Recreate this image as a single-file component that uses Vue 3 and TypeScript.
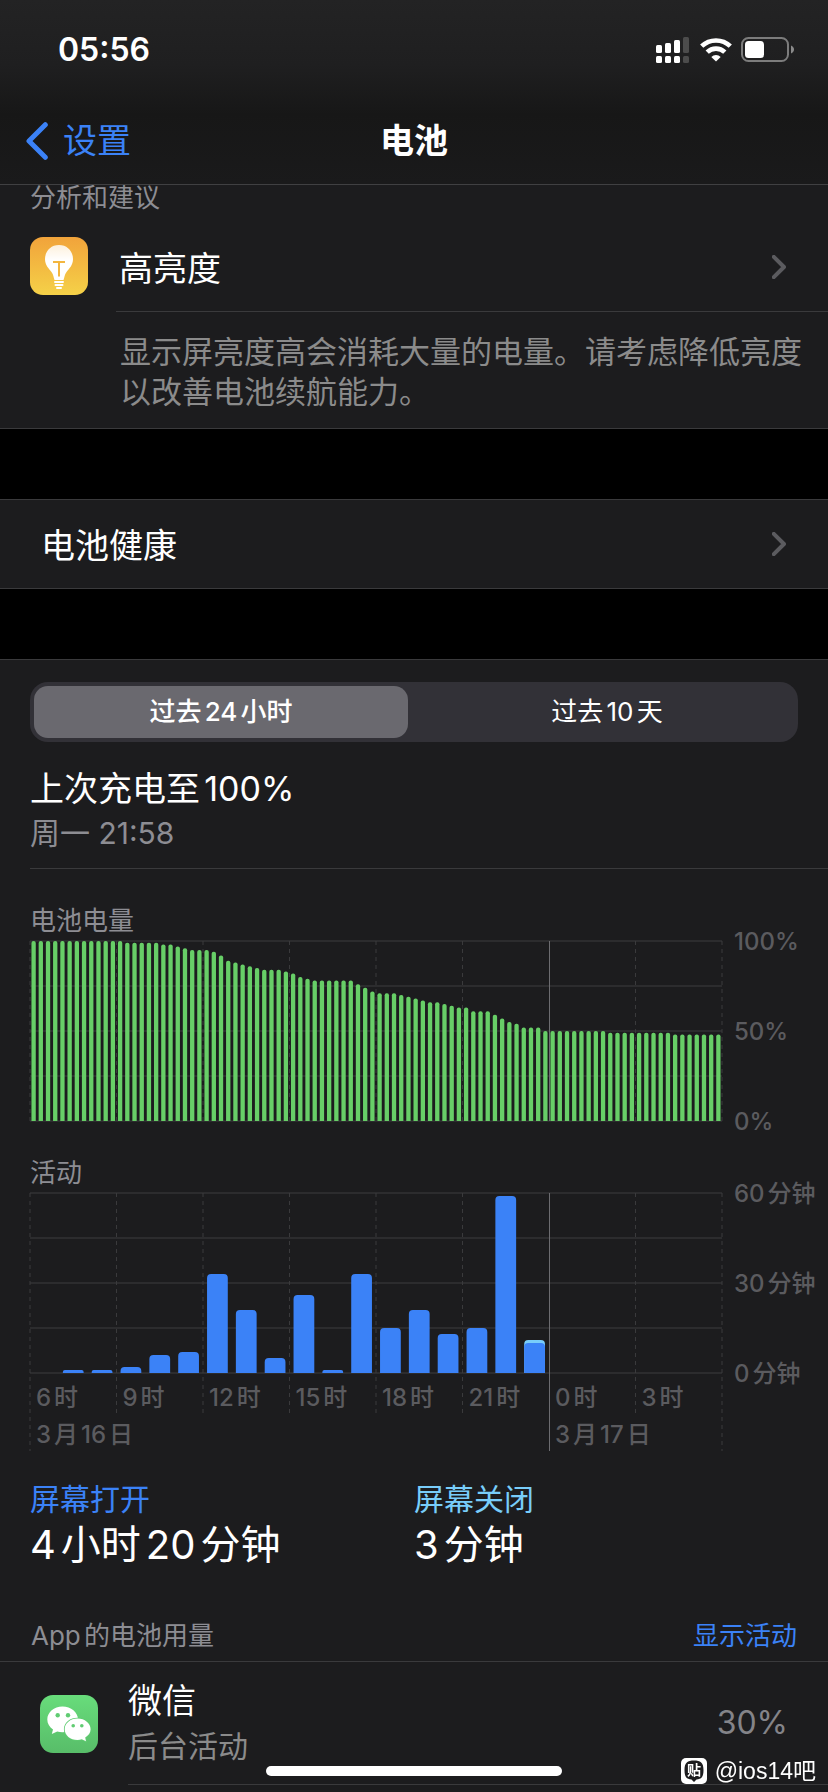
<script setup lang="ts">
import { computed, ref } from 'vue'

type Range = 'day' | 'tenDays'

interface HourUsage {
  hour: number
  screenOn: number
  screenOff: number
}

interface AppUsage {
  name: string
  detail: string
  share: number
}

const ranges: { id: Range; label: string }[] = [
  { id: 'day', label: '过去24小时' },
  { id: 'tenDays', label: '过去10天' },
]
const selectedRange = ref<Range>('day')

// Battery level runs as [percent, number of consecutive quarter-hour samples].
const levelRuns: [number, number][] = [
  [100, 13], [99, 5], [98, 2], [97, 1], [96, 1], [95, 3], [94, 1], [92, 1],
  [89, 1], [88, 1], [87, 1], [86, 1], [85, 1], [84, 3], [83, 1], [82, 1],
  [80, 1], [79, 1], [78, 6], [76, 1], [74, 1], [72, 1], [71, 3], [70, 1],
  [69, 1], [68, 1], [67, 1], [66, 2], [65, 1], [64, 1], [63, 2], [61, 3],
  [59, 1], [57, 1], [55, 1], [54, 1], [52, 3], [50, 9], [49, 9], [48, 7],
]
const levels = computed(() => levelRuns.flatMap(([value, count]) => Array<number>(count).fill(value)))

const screenOnMinutes = [0, 1, 1, 2, 6, 7, 33, 21, 5, 26, 1, 33, 15, 21, 13, 15, 59, 10, 0, 0, 0, 0, 0, 0]
const usage = computed<HourUsage[]>(() =>
  screenOnMinutes.map((screenOn, hour) => ({ hour, screenOn, screenOff: hour === 17 ? 1 : 0 })),
)
const activeHours = computed(() => usage.value.filter((u) => u.screenOn + u.screenOff > 0))

const plotTop = 1
const plotHeight = 180
const plotBottom = plotTop + plotHeight
const rows = [0, 1, 2, 3, 4].map((n) => plotTop + (n * plotHeight) / 4)
const ticks = [0, 1, 2, 3, 4, 5, 6, 7, 8]
const midnight = 6

const hourLabels = ['6时', '9时', '12时', '15时', '18时', '21时', '0时', '3时']
const levelAxis = ['100%', '50%', '0%']
const activityAxis = ['60分钟', '30分钟', '0分钟']

const levelY = (value: number) => plotBottom - (value / 100) * plotHeight
const minuteY = (minutes: number) => plotBottom - (minutes / 60) * plotHeight
const percent = (fraction: number) => `${fraction * 100}%`
const tickEnd = (tick: number) => (tick === 0 || tick === 8 ? 259 : 225)

const apps: AppUsage[] = [{ name: '微信', detail: '后台活动', share: 30 }]
</script>

<template>
  <div class="screen" lang="zh-CN">
    <header class="topbar">
      <div class="status">
        <span class="clock">05:56</span>
        <div class="indicators">
          <svg class="signal" width="33" height="26" viewBox="0 0 33 26" aria-label="信号">
            <g fill="#fff">
              <rect x="0" y="8" width="6" height="8" rx="1.5" />
              <rect x="9" y="6" width="6" height="10" rx="1.5" />
              <rect x="18" y="3" width="6" height="13" rx="1.5" />
              <rect x="0" y="19" width="6" height="7" rx="1.5" />
              <rect x="9" y="19" width="6" height="7" rx="1.5" />
              <rect x="18" y="19" width="6" height="7" rx="1.5" />
            </g>
            <g fill="#4c4c4c">
              <rect x="27" y="0" width="6" height="16" rx="1.5" />
              <rect x="27" y="19" width="6" height="7" rx="1.5" />
            </g>
          </svg>
          <svg class="wifi" width="32" height="26" viewBox="0 0 32 26" aria-label="无线局域网">
            <g fill="none" stroke="#fff" stroke-width="4.6">
              <path d="M1.7 9.2 A20.6 20.6 0 0 1 30.3 9.2" />
              <path d="M7.2 15.2 A12.6 12.6 0 0 1 24.8 15.2" />
            </g>
            <path d="M16 24.6 L11.3 19.9 A6.8 6.8 0 0 1 20.7 19.9 Z" fill="#fff" />
          </svg>
          <svg class="cell" width="53" height="26" viewBox="0 0 53 26" aria-label="电池">
            <rect x="1" y="1" width="46" height="23" rx="6.5" fill="none" stroke="#7c7c7c" stroke-width="2" />
            <rect x="4" y="4" width="19" height="17" rx="3.5" fill="#fff" />
            <path d="M50 8.5 C54 10 54 15 50 16.5 Z" fill="#8a8a8a" />
          </svg>
        </div>
      </div>
      <nav class="nav">
        <a class="back" href="#settings">
          <svg width="22" height="38" viewBox="0 0 22 38" aria-hidden="true">
            <path d="M19.3 2.7 L3 19 L19.3 35.3" fill="none" stroke="currentColor" stroke-width="5" stroke-linecap="round" stroke-linejoin="round" />
          </svg>
          <span>设置</span>
        </a>
        <h1 class="title">电池</h1>
      </nav>
    </header>

    <main>
      <section class="group insights">
        <h2 class="caption">分析和建议</h2>
        <button class="insight-row" type="button">
          <svg class="icon" width="58" height="58" viewBox="0 0 58 58" aria-hidden="true">
            <defs>
              <linearGradient id="amber" x1="0" y1="0" x2="0" y2="1">
                <stop offset="0" stop-color="#f1a33b" />
                <stop offset="1" stop-color="#f5d148" />
              </linearGradient>
              <linearGradient id="glow" x1="0" y1="0" x2="0" y2="1">
                <stop offset="0" stop-color="#fff" stop-opacity=".82" />
                <stop offset=".45" stop-color="#fff" />
              </linearGradient>
            </defs>
            <rect width="58" height="58" rx="13" fill="url(#amber)" />
            <path d="M29 8 C20.5 8 15 14.5 15 22 C15 28.5 19 31.5 21.5 35 C23.5 38 23.5 40 24.5 43 H33.5 C34.5 40 34.5 38 36.5 35 C39 31.5 43 28.5 43 22 C43 14.5 37.5 8 29 8 Z" fill="url(#glow)" />
            <path d="M23 25 H35 M29 25 V39.5" fill="none" stroke="#f3b640" stroke-width="2" />
            <path d="M25 45 H33 M25.5 48 H32.5 M27 51 H31" stroke="#fff" stroke-width="2" stroke-linecap="round" />
          </svg>
          <span class="insight-main">
            <span class="label">高亮度</span>
            <svg class="chevron" width="14" height="24" viewBox="0 0 14 24" aria-hidden="true">
              <path d="M1.8 1.8 L12 12 L1.8 22.2" />
            </svg>
          </span>
        </button>
        <p class="advice">显示屏亮度高会消耗大量的电量。请考虑降低亮度以改善电池续航能力。</p>
      </section>

      <section class="group">
        <button class="health-row" type="button">
          <span class="label">电池健康</span>
          <svg class="chevron" width="14" height="24" viewBox="0 0 14 24" aria-hidden="true">
            <path d="M1.8 1.8 L12 12 L1.8 22.2" />
          </svg>
        </button>
      </section>

      <section class="group usage">
        <div class="segments" role="group" aria-label="时间范围">
          <button
            v-for="range in ranges"
            :key="range.id"
            type="button"
            class="segment"
            :class="{ selected: selectedRange === range.id }"
            :aria-pressed="selectedRange === range.id"
            @click="selectedRange = range.id"
          >
            {{ range.label }}
          </button>
        </div>

        <div class="charge">
          <p class="charge-level">上次充电至100%</p>
          <p class="charge-time">周一 21:58</p>
        </div>

        <h3 class="caption chart-title">电池电量</h3>
        <div class="chart">
          <svg class="plot level-plot" role="img" aria-label="电池电量">
            <rect v-for="y in rows" :key="y" class="grid-row" x="0" :y="y - 1" width="100%" height="2" />
            <template v-for="tick in ticks" :key="tick">
              <line v-if="tick !== midnight" class="grid-tick" :x1="percent(tick / 8)" :x2="percent(tick / 8)" y1="1" y2="181" />
            </template>
            <rect class="midnight" x="75%" y="1" width="1" height="180" />
            <svg width="100%" height="181">
              <rect
                v-for="(level, i) in levels"
                :key="i"
                class="level-bar"
                :x="percent((i + 0.2) / 96)"
                :y="levelY(level)"
                :width="percent(0.6 / 96)"
                height="200"
                rx="2"
              />
            </svg>
          </svg>
          <div class="axis">
            <span v-for="label in levelAxis" :key="label">{{ label }}</span>
          </div>
        </div>

        <h3 class="caption chart-title activity-title">活动</h3>
        <div class="chart">
          <div class="activity">
            <svg class="plot activity-plot" role="img" aria-label="活动">
              <rect v-for="y in rows" :key="y" class="grid-row" x="0" :y="y - 1" width="100%" height="2" />
              <template v-for="tick in ticks" :key="tick">
                <line v-if="tick !== midnight" class="grid-tick" :x1="percent(tick / 8)" :x2="percent(tick / 8)" y1="1" :y2="tickEnd(tick)" />
              </template>
              <rect class="midnight" x="75%" y="1" width="1" height="258" />
              <svg width="100%" height="181">
                <template v-for="u in activeHours" :key="u.hour">
                  <rect v-if="u.screenOff" class="off-bar" :x="percent((u.hour + 0.14) / 24)" :y="minuteY(u.screenOn + u.screenOff)" :width="percent(0.72 / 24)" height="200" rx="4" />
                  <rect class="on-bar" :x="percent((u.hour + 0.14) / 24)" :y="minuteY(u.screenOn)" :width="percent(0.72 / 24)" height="200" :rx="u.screenOn > 1 ? 4 : 2" />
                </template>
              </svg>
            </svg>
            <div class="x-axis">
              <div class="hours">
                <span v-for="label in hourLabels" :key="label">{{ label }}</span>
              </div>
              <div class="days">
                <span>3月16日</span>
                <span>3月17日</span>
              </div>
            </div>
          </div>
          <div class="axis">
            <span v-for="label in activityAxis" :key="label">{{ label }}</span>
          </div>
        </div>

        <dl class="totals">
          <div>
            <dt class="on">屏幕打开</dt>
            <dd>4小时20分钟</dd>
          </div>
          <div>
            <dt class="off">屏幕关闭</dt>
            <dd>3分钟</dd>
          </div>
        </dl>

        <div class="apps-head">
          <h3 class="caption">App的电池用量</h3>
          <button class="toggle" type="button">显示活动</button>
        </div>
        <ul class="apps">
          <li v-for="app in apps" :key="app.name" class="app">
            <svg class="icon" width="58" height="58" viewBox="0 0 58 58" aria-hidden="true">
              <defs>
                <linearGradient id="leaf" x1="0" y1="0" x2="0" y2="1">
                  <stop offset="0" stop-color="#68dc7b" />
                  <stop offset="1" stop-color="#58bd69" />
                </linearGradient>
              </defs>
              <rect width="58" height="58" rx="13" fill="url(#leaf)" />
              <path d="M22.5 11.5 C14 11.5 7.3 17.3 7.3 24.5 C7.3 28.5 9.5 32 13 34.5 L11.8 39 L17.2 36.5 C19 37 20.7 37.3 22.5 37.3 C31 37.3 38 31.6 38 24.5 C38 17.3 31 11.5 22.5 11.5 Z" fill="#fff" />
              <path d="M37.5 23.5 C30.3 23.5 24.7 28.3 24.7 34.2 C24.7 40.2 30.3 45 37.5 45 C39 45 40.5 44.8 41.8 44.3 L46 46.2 L45.2 42.5 C48.5 40.5 50.6 37.5 50.6 34.2 C50.6 28.3 44.8 23.5 37.5 23.5 Z" fill="#fff" stroke="#60cc72" stroke-width="1.6" paint-order="stroke" />
              <g fill="#60cc72">
                <circle cx="17.7" cy="20.3" r="2.2" />
                <circle cx="28" cy="20.3" r="2.2" />
                <circle cx="33.2" cy="30.7" r="1.8" />
                <circle cx="41.8" cy="30.7" r="1.8" />
              </g>
            </svg>
            <div class="app-main">
              <div class="app-text">
                <span class="app-name">{{ app.name }}</span>
                <span class="app-detail">{{ app.detail }}</span>
              </div>
              <span class="app-share">{{ app.share }}%</span>
            </div>
          </li>
        </ul>
      </section>
    </main>

    <div class="watermark">
      <svg width="26" height="26" viewBox="0 0 26 26" aria-hidden="true">
        <rect width="26" height="26" rx="5" fill="#fff" />
        <path d="M13 2.5 C19.5 2.5 22.5 4.5 22.5 12 C22.5 19 20.5 21 15.5 21.6 L13 24 L10.5 21.6 C5.5 21 3.5 19 3.5 12 C3.5 4.5 6.5 2.5 13 2.5 Z" fill="#1c1c1e" />
        <text class="stamp" x="13" y="17" text-anchor="middle">贴</text>
      </svg>
      <span>@ios14吧</span>
    </div>
    <div class="home-indicator"></div>
  </div>
</template>

<style>
body {
  background: #1c1c1e;
}
</style>

<style scoped>
.screen {
  display: flex;
  flex-direction: column;
  min-height: 100vh;
  background: #000;
  color: #fff;
  font-family: Inter, 'Noto Sans CJK SC', sans-serif;
  text-autospace: normal;
}

.screen *,
.screen {
  box-sizing: border-box;
}

main {
  display: flex;
  flex: 1;
  flex-direction: column;
}

h1,
h2,
h3,
p,
dl,
dd,
ul {
  margin: 0;
  padding: 0;
}

button {
  border: 0;
  padding: 0;
  background: none;
  color: inherit;
  font: inherit;
  text-align: left;
  cursor: pointer;
}

svg {
  display: block;
  flex: none;
}

.topbar {
  position: sticky;
  top: 0;
  z-index: 2;
  background: linear-gradient(#232324, #1f1f20 35%, #171717 62%, #1a1a1b);
  border-bottom: 1px solid #404042;
}

.status {
  display: flex;
  justify-content: space-between;
  align-items: center;
  height: 100px;
  padding: 0 34px 0 58px;
}

.clock {
  font-size: 32px;
  line-height: 40px;
  font-weight: 600;
}

.indicators {
  display: flex;
  align-items: center;
  gap: 11px;
}

.wifi {
  margin-right: -2px;
}

.nav {
  display: grid;
  grid-template-columns: 1fr auto 1fr;
  align-items: center;
  height: 84px;
  padding: 0 26px 2px;
}

.back {
  display: flex;
  align-items: center;
  gap: 15px;
  color: #3b82f7;
  font-size: 34px;
  line-height: 44px;
  text-decoration: none;
}

.title {
  font-size: 34px;
  line-height: 44px;
  font-weight: 600;
}

.group {
  background: #1c1c1e;
  border-top: 1px solid #3a3a3c;
  border-bottom: 1px solid #3a3a3c;
  margin-bottom: 70px;
}

.group:last-child {
  flex: 1;
  margin-bottom: 0;
  border-bottom: 0;
}

.insights {
  border-top: 0;
}

.caption {
  color: #8d8d93;
  font-size: 26px;
  line-height: 26px;
  font-weight: 400;
}

.insights .caption {
  padding: 0 30px 9px;
}

.insight-row {
  display: flex;
  align-items: center;
  width: 100%;
  gap: 28px;
  padding-left: 30px;
}

.insight-main {
  display: flex;
  flex: 1;
  align-items: center;
  justify-content: space-between;
  height: 92px;
  padding: 2px 42px 0 3px;
  border-bottom: 1px solid #3a3a3c;
}

.label {
  padding-top: 4px;
  font-size: 34px;
  line-height: 44px;
}

.chevron {
  fill: none;
  stroke: #5b5b5f;
  stroke-width: 4;
  stroke-linecap: round;
  stroke-linejoin: round;
}

.advice {
  padding: 20px 24px 16px 120px;
  color: #8b8b8b;
  font-size: 31px;
  line-height: 40px;
}

.health-row {
  display: flex;
  align-items: center;
  justify-content: space-between;
  width: 100%;
  height: 88px;
  padding: 0 42px 0 41px;
}

.segments {
  display: grid;
  grid-template-columns: 1fr 1fr;
  gap: 12px;
  margin: 22px 30px 0;
  padding: 4px;
  border-radius: 18px;
  background: #323137;
}

.segment {
  height: 52px;
  border-radius: 14px;
  font-size: 26px;
  line-height: 32px;
  font-weight: 400;
  text-align: center;
}

.segment.selected {
  background: #6a696f;
  font-weight: 500;
}

.charge {
  margin-left: 30px;
  padding: 25px 0 13px;
  border-bottom: 1px solid #3a3a3c;
}

.charge-level {
  font-size: 34px;
  line-height: 44px;
}

.charge-time {
  color: #8d8d93;
  font-size: 30px;
  line-height: 44px;
}

.chart-title {
  padding: 36px 30px 0;
  line-height: 32px;
}

.activity-title {
  padding-top: 19px;
}

.chart {
  display: flex;
  align-items: flex-start;
  gap: 12px;
  padding: 3px 0 0 30px;
}

.plot {
  flex: 1;
  width: 100%;
  min-width: 0;
  overflow: visible;
}

.level-plot {
  height: 182px;
}

.activity {
  display: grid;
  flex: 1;
  min-width: 0;
}

.activity-plot,
.x-axis {
  grid-area: 1 / 1;
}

.activity-plot {
  height: 259px;
}

.grid-row {
  fill: #2c2c2e;
}

.grid-tick {
  stroke: #3a3a3c;
  stroke-dasharray: 4 4;
}

.midnight {
  fill: #6c6c70;
}

.level-bar {
  fill: #67ce67;
}

.on-bar {
  fill: #3b82f7;
}

.off-bar {
  fill: #78cdfa;
}

.axis {
  display: flex;
  flex-direction: column;
  justify-content: space-between;
  flex: none;
  width: 94px;
  height: 212px;
  margin-top: -14px;
  color: #5b5b5f;
  font-size: 24px;
  line-height: 32px;
  font-weight: 500;
  white-space: nowrap;
}

.x-axis {
  display: flex;
  flex-direction: column;
  align-self: start;
  gap: 5px;
  padding-top: 190px;
  color: #5b5b5f;
  font-size: 24px;
  line-height: 32px;
  font-weight: 500;
}

.hours {
  display: grid;
  grid-template-columns: repeat(8, 1fr);
}

.days {
  display: grid;
  grid-template-columns: 3fr 1fr;
}

.hours span,
.days span {
  padding-left: 6px;
  white-space: nowrap;
}

.totals {
  display: grid;
  grid-template-columns: 1fr 1fr;
  margin: 28px 30px 0;
}

.totals dt {
  font-size: 30px;
  line-height: 40px;
}

.totals dd {
  font-size: 40px;
  line-height: 52px;
}

.on {
  color: #3b82f7;
}

.off {
  color: #78cdfa;
}

.apps-head {
  display: flex;
  align-items: center;
  justify-content: space-between;
  padding: 49px 31px 9px;
  border-bottom: 1px solid #3a3a3c;
}

.apps-head .caption,
.toggle {
  font-size: 26px;
  line-height: 32px;
}

.toggle {
  color: #3b82f7;
}

.apps {
  list-style: none;
}

.app {
  display: flex;
  align-items: center;
  gap: 30px;
  padding-left: 40px;
}

.app-main {
  display: flex;
  flex: 1;
  align-items: center;
  justify-content: space-between;
  padding: 16px 40px 16px 0;
  border-bottom: 1px solid #3a3a3c;
}

.app-text {
  display: flex;
  flex-direction: column;
}

.app-name {
  font-size: 34px;
  line-height: 46px;
}

.app-detail {
  color: #8b8b8b;
  font-size: 30px;
  line-height: 44px;
}

.app-share {
  color: #848489;
  font-size: 32px;
  line-height: 44px;
}

.home-indicator {
  position: fixed;
  left: 50%;
  bottom: 16px;
  width: 296px;
  height: 10px;
  margin-left: -148px;
  border-radius: 5px;
  background: #fff;
}

.watermark {
  position: fixed;
  right: 12px;
  bottom: 5px;
  display: flex;
  align-items: center;
  gap: 8px;
  font-family: 'Liberation Sans', 'Noto Sans CJK SC', sans-serif;
  font-size: 23px;
  line-height: 32px;
  text-autospace: no-autospace;
}

.stamp {
  fill: #fff;
  font-family: 'Noto Sans CJK SC', sans-serif;
  font-size: 14px;
  font-weight: 700;
}
</style>
